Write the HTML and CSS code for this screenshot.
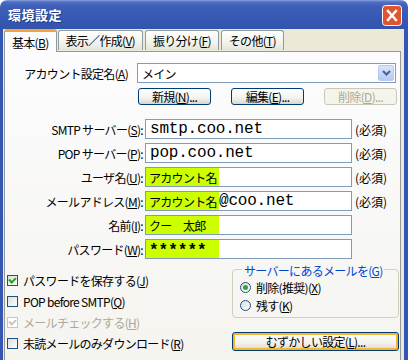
FILE: index.html
```html
<!DOCTYPE html>
<html lang="ja">
<head>
<meta charset="UTF-8">
<title>環境設定</title>
<link rel="stylesheet" href="styles.css">
</head>
<body>
<div class="window">
  <div class="titlebar">
    <span class="title">環境設定</span>
    <span class="close">
      <svg width="20" height="21" viewBox="0 0 20 21">
        <rect x="0.5" y="0.5" width="19" height="20" rx="3" fill="#E0542E" stroke="#FFFFFF"/>
        <path d="M6 6 L14 15 M14 6 L6 15" stroke="#FFFFFF" stroke-width="2.4" stroke-linecap="square"/>
      </svg>
    </span>
  </div>

  <div class="body">
    <div class="tabs">
      <div class="tab active"><span>基本(<u>B</u>)</span></div>
      <div class="tab"><span>表示／作成(<u>V</u>)</span></div>
      <div class="tab"><span>振り分け(<u>F</u>)</span></div>
      <div class="tab"><span>その他(<u>T</u>)</span></div>
    </div>

    <div class="panel">
      <div class="account-row">
        <label class="account-label">アカウント設定名(<u>A</u>)</label>
        <div class="combo">
          <span>メイン</span>
          <span class="combo-btn">
            <svg width="9" height="6" viewBox="0 0 9 6"><path d="M1 1 L4.5 4.5 L8 1" fill="none" stroke="#4D6185" stroke-width="2"/></svg>
          </span>
        </div>
      </div>

      <div class="account-buttons">
        <button class="btn">新規(<u>N</u>)...</button>
        <button class="btn">編集(<u>E</u>)...</button>
        <button class="btn disabled">削除(<u>D</u>)...</button>
      </div>

      <div class="fields">
        <label>SMTP サーバー(<u>S</u>):</label>
        <div class="input"><span class="mono">smtp.coo.net</span></div>
        <span class="note">(必須)</span>

        <label>POP サーバー(<u>P</u>):</label>
        <div class="input"><span class="mono">pop.coo.net</span></div>
        <span class="note">(必須)</span>

        <label>ユーザ名(<u>U</u>):</label>
        <div class="input"><span class="mark">アカウント名</span></div>
        <span class="note">(必須)</span>

        <label>メールアドレス(<u>M</u>):</label>
        <div class="input"><span class="mark">アカウント名</span><span class="mono tight">@coo.net</span></div>
        <span class="note">(必須)</span>

        <label>名前(<u>I</u>):</label>
        <div class="input"><span class="mark">クー　太郎</span></div>
        <span></span>

        <label>パスワード(<u>W</u>):</label>
        <div class="input"><span class="mark stars">******</span></div>
        <span></span>
      </div>

      <div class="bottom">
        <div class="checks">
          <div class="check"><span class="box on"></span><span>パスワードを保存する(<u>J</u>)</span></div>
          <div class="check"><span class="box"></span><span>POP before SMTP(<u>Q</u>)</span></div>
          <div class="check off"><span class="box on"></span><span>メールチェックする(<u>H</u>)</span></div>
          <div class="check"><span class="box"></span><span>未読メールのみダウンロード(<u>R</u>)</span></div>
        </div>
        <div class="side">
          <div class="group">
            <span class="legend">サーバーにあるメールを(<u>G</u>)</span>
            <div class="radio"><span class="dot on"></span><span>削除(推奨)(<u>X</u>)</span></div>
            <div class="radio"><span class="dot"></span><span>残す(<u>K</u>)</span></div>
          </div>
          <button class="btn wide">むずかしい設定(<u>L</u>)...</button>
        </div>
      </div>
    </div>
  </div>
</div>
</body>
</html>
```

FILE: styles.css
```css
body {
  margin: 0;
  background: #ffffff;
  font-family: "Noto Sans CJK JP", "Liberation Sans", sans-serif;
  font-size: 12px;
  letter-spacing: -0.7px;
  color: #000000;
}
u {
  text-decoration-thickness: 1px;
  text-underline-offset: 1px;
}
.window {
  width: 408px;
  height: 360px;
  overflow: hidden;
  display: flex;
  flex-direction: column;
}
.titlebar {
  height: 29px;
  flex-shrink: 0;
  display: flex;
  align-items: center;
  justify-content: space-between;
  padding: 0 6px 0 8px;
  border-radius: 7px 7px 0 0;
  background: linear-gradient(#8AA2DC 0, #4F6EC3 2px, #3E5FB9 6px, #3759B4 18px, #3253AE 29px);
}
.title {
  color: #ffffff;
  font-weight: bold;
  font-size: 13px;
  letter-spacing: 0.5px;
  text-shadow: 1px 1px 0 #1E3A84;
}
.close {
  display: flex;
  margin-top: 1px;
}
.body {
  flex: 1;
  background: #ECE9D8;
  border-left: 3px solid #3557B3;
  border-right: 4px solid #3557B3;
  padding: 0 3px 0 1px;
  display: flex;
  flex-direction: column;
}
.tabs {
  height: 22px;
  display: flex;
  align-items: flex-end;
  gap: 2px;
  position: relative;
  z-index: 1;
}
.tab {
  height: 20px;
  box-sizing: border-box;
  padding: 0 7px;
  display: flex;
  align-items: center;
  border: 1px solid #919B9C;
  border-bottom: none;
  border-radius: 3px 3px 0 0;
  background: linear-gradient(#FFFFFF, #F0F0EA 70%, #E4E3DC);
  margin-bottom: 1px;
}
.tab.active {
  height: 23px;
  margin: 0 -1px -1px 0;
  padding: 0 7px;
  background: #FCFCFE;
  border-top: 3px solid #F3A43A;
}
.panel {
  flex: 1;
  border: 1px solid #919B9C;
  border-bottom: none;
  background: linear-gradient(#FCFCFE, #F5F4EF);
  padding: 11px 0 0;
}
.account-row {
  display: flex;
  align-items: center;
  height: 20px;
}
.account-label {
  width: 123px;
  text-align: right;
}
.combo {
  margin-left: 9px;
  width: 259px;
  height: 20px;
  box-sizing: border-box;
  border: 1px solid #7F9DB9;
  background: #ffffff;
  display: flex;
  align-items: center;
  justify-content: space-between;
  padding: 0 1px 0 4px;
}
.combo-btn {
  width: 16px;
  height: 16px;
  border-radius: 2px;
  background: linear-gradient(#D7E3FD, #B6CAF7);
  border: 1px solid #B9C9EF;
  box-sizing: border-box;
  display: flex;
  align-items: center;
  justify-content: center;
}
.account-buttons {
  display: flex;
  gap: 20px;
  margin: 5px 0 0 133px;
}
.btn {
  font-family: inherit;
  font-size: 12px;
  letter-spacing: -0.7px;
  width: 73px;
  height: 17px;
  padding: 0;
  border: 1px solid #003C74;
  border-radius: 3px;
  background: linear-gradient(#FFFFFF, #F3F2EE 60%, #D8D6CC);
  color: #000000;
  line-height: 14px;
}
.btn.disabled {
  border-color: #C9C7BA;
  background: #F5F4EA;
  color: #ACA899;
}
.fields {
  display: grid;
  grid-template-columns: 140px 207px auto;
  grid-auto-rows: 20px;
  row-gap: 4px;
  margin-top: 14px;
  align-items: center;
}
.fields label {
  text-align: right;
  padding-right: 2px;
}
.input {
  height: 20px;
  box-sizing: border-box;
  border: 1px solid #7F9DB9;
  background: #ffffff;
  display: flex;
  align-items: stretch;
}
.mono {
  font-family: "Liberation Mono", monospace;
  font-size: 16px;
  letter-spacing: -0.2px;
  line-height: 18px;
  padding-left: 4px;
}
.mono.tight {
  padding-left: 0;
}
.mark {
  width: 73px;
  box-sizing: border-box;
  background: #CCFF00;
  padding-left: 3px;
  white-space: nowrap;
  display: flex;
  align-items: center;
}
.mark.stars {
  font-family: "Liberation Mono", monospace;
  font-weight: bold;
  font-size: 16px;
  letter-spacing: 0;
  padding-top: 3px;
}
.note {
  padding-left: 3px;
  letter-spacing: 0;
}
.bottom {
  display: flex;
  justify-content: space-between;
  margin-top: 10px;
  padding: 0 1px 0 2px;
}
.checks {
  display: flex;
  flex-direction: column;
  gap: 8px;
  padding-top: 5px;
}
.check {
  display: flex;
  align-items: center;
  height: 13px;
  gap: 5px;
}
.check.off {
  color: #ACA899;
}
.box {
  width: 11px;
  height: 11px;
  box-sizing: border-box;
  border: 1px solid #1C5180;
  background: linear-gradient(135deg, #DCDCD7, #FFFFFF);
  display: flex;
  align-items: center;
  justify-content: center;
}
.box.on::after {
  content: "";
  width: 5px;
  height: 3px;
  border-left: 2px solid #21A121;
  border-bottom: 2px solid #21A121;
  transform: rotate(-45deg);
  margin-top: -2px;
}
.check.off .box {
  border-color: #C9C7BA;
  background: #FFFFFF;
}
.check.off .box.on::after {
  border-color: #C9C7BA;
}
.side {
  width: 167px;
  display: flex;
  flex-direction: column;
  gap: 14px;
}
.group {
  position: relative;
  height: 49px;
  box-sizing: border-box;
  border: 1px solid #D0D0BF;
  border-radius: 4px;
  padding: 11px 0 0 7px;
  display: flex;
  flex-direction: column;
  gap: 6px;
}
.legend {
  position: absolute;
  top: -8px;
  left: 9px;
  padding: 0 2px;
  background: #F7F6F2;
  color: #0046D5;
}
.radio {
  display: flex;
  align-items: center;
  gap: 5px;
  height: 12px;
}
.dot {
  width: 11px;
  height: 11px;
  box-sizing: border-box;
  border: 1px solid #1C5180;
  border-radius: 50%;
  background: linear-gradient(135deg, #DCDCD7, #FFFFFF);
  display: flex;
  align-items: center;
  justify-content: center;
}
.dot.on::after {
  content: "";
  width: 5px;
  height: 5px;
  border-radius: 50%;
  background: #2DAA2D;
}
.btn.wide {
  width: 167px;
  height: 19px;
  border-color: #003C74;
  box-shadow: inset 0 0 0 2px #F8B330;
}
```
